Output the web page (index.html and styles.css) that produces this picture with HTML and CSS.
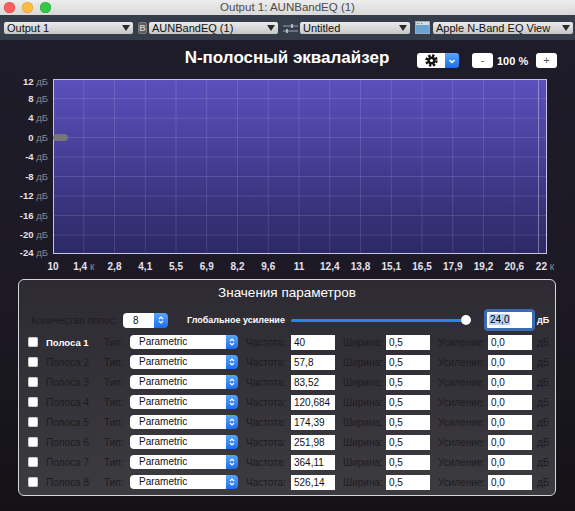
FILE: index.html
```html
<!DOCTYPE html>
<html lang="ru">
<head>
<meta charset="utf-8">
<title>Output 1: AUNBandEQ (1)</title>
<link rel="stylesheet" href="styles.css">
</head>
<body>
<div class="window">
  <header class="titlebar">
    <div class="lights"><span class="light red"></span><span class="light yellow"></span><span class="light green"></span></div>
    <div class="wtitle">Output 1: AUNBandEQ (1)</div>
    <div></div>
  </header>
  <nav class="toolbar">
    <div class="popup p-out"><span>Output 1</span><i class="arr"></i></div>
    <span class="bicon">B</span>
    <div class="popup p-au"><span>AUNBandEQ (1)</span><i class="arr"></i></div>
    <svg class="slidericon" viewBox="0 0 15 12" width="15" height="12">
      <path d="M0 4h15M0 9h15" stroke="#9aa3b0" stroke-width="1"/>
      <path d="M9 2v4M4 7v4" stroke="#c9ced6" stroke-width="1.6"/>
    </svg>
    <div class="popup p-unt"><span>Untitled</span><i class="arr"></i></div>
    <svg class="winicon" viewBox="0 0 15 13" width="15" height="13">
      <rect x="0.5" y="0.5" width="14" height="12" fill="#6aa2d2" stroke="#9ab" stroke-width="1"/>
      <rect x="1" y="1" width="13" height="3" fill="#d8dde4"/>
      <circle cx="2.6" cy="2.5" r="0.8" fill="#e44"/>
      <circle cx="4.6" cy="2.5" r="0.8" fill="#eb3"/>
      <circle cx="6.6" cy="2.5" r="0.8" fill="#4b4"/>
    </svg>
    <div class="popup p-view"><span>Apple N-Band EQ View</span><i class="arr"></i></div>
  </nav>
  <main class="main">
    <div class="header">
      <h1 class="eqtitle">N-полосный эквалайзер</h1>
      <div class="hctrls">
        <div class="gearbtn">
          <span class="gearpart">
            <svg viewBox="0 0 13 13" width="13" height="13">
              <circle cx="6.5" cy="6.5" r="4.9" fill="none" stroke="#111" stroke-width="2.6" stroke-dasharray="2.3 1.55"/>
              <circle cx="6.5" cy="6.5" r="4" fill="#111"/>
              <circle cx="6.5" cy="6.5" r="1.6" fill="#fff"/>
            </svg>
          </span>
          <span class="bluepart">
            <svg viewBox="0 0 10 10" width="10" height="10"><polyline points="2.5,4 5,6.5 7.5,4" fill="none" stroke="#fff" stroke-width="1.5"/></svg>
          </span>
        </div>
        <span class="sbtn minus">-</span>
        <span class="zoomval">100 %</span>
        <span class="sbtn plus">+</span>
      </div>
    </div>

    <svg class="graph" viewBox="0 72 575 204" width="575" height="204">
      <defs>
        <linearGradient id="plotg" x1="0" y1="0" x2="0" y2="1">
          <stop offset="0" stop-color="#5b50bd"/>
          <stop offset="1" stop-color="#2b2966"/>
        </linearGradient>
      </defs>
      <rect x="53.5" y="79.5" width="493" height="174" fill="url(#plotg)"/>
      <g class="grid">
        <path d="M83.75 80V254M114.5 80V254M145.25 80V254M176 80V254M206.75 80V254M237.5 80V254M268.25 80V254M299 80V254M329.75 80V254M360.5 80V254M391.25 80V254M422 80V254M452.75 80V254M483.5 80V254M514.25 80V254"/>
        <path d="M54 98.5H546M54 118H546M54 137.5H546M54 157H546M54 176.5H546M54 196H546M54 215.5H546M54 235H546"/>
      </g>
      <path class="hiline" d="M538.5 80V254"/>
      <rect class="plotborder" x="53.5" y="79.5" width="493" height="174"/>
      <rect class="handle" x="53" y="134" width="15" height="7" rx="3.5"/>
      <g class="ylab">
        <text x="48" y="84.5"><tspan class="num">12</tspan><tspan class="unit"> дБ</tspan></text>
        <text x="48" y="101.5"><tspan class="num">8</tspan><tspan class="unit"> дБ</tspan></text>
        <text x="48" y="121"><tspan class="num">4</tspan><tspan class="unit"> дБ</tspan></text>
        <text x="48" y="140.5"><tspan class="num">0</tspan><tspan class="unit"> дБ</tspan></text>
        <text x="48" y="160"><tspan class="num">-4</tspan><tspan class="unit"> дБ</tspan></text>
        <text x="48" y="179.5"><tspan class="num">-8</tspan><tspan class="unit"> дБ</tspan></text>
        <text x="48" y="199"><tspan class="num">-12</tspan><tspan class="unit"> дБ</tspan></text>
        <text x="48" y="218.5"><tspan class="num">-16</tspan><tspan class="unit"> дБ</tspan></text>
        <text x="48" y="238"><tspan class="num">-20</tspan><tspan class="unit"> дБ</tspan></text>
        <text x="48" y="255.5"><tspan class="num">-24</tspan><tspan class="unit"> дБ</tspan></text>
      </g>
      <g class="xlab">
        <text x="53" y="269.5">10</text>
        <text x="83.75" y="269.5">1,4<tspan class="unit"> к</tspan></text>
        <text x="114.5" y="269.5">2,8</text>
        <text x="145.25" y="269.5">4,1</text>
        <text x="176" y="269.5">5,5</text>
        <text x="206.75" y="269.5">6,9</text>
        <text x="237.5" y="269.5">8,2</text>
        <text x="268.25" y="269.5">9,6</text>
        <text x="299" y="269.5">11</text>
        <text x="329.75" y="269.5">12,4</text>
        <text x="360.5" y="269.5">13,8</text>
        <text x="391.25" y="269.5">15,1</text>
        <text x="422" y="269.5">16,5</text>
        <text x="452.75" y="269.5">17,9</text>
        <text x="483.5" y="269.5">19,2</text>
        <text x="514.25" y="269.5">20,6</text>
        <text x="545" y="269.5">22<tspan class="unit"> к</tspan></text>
      </g>
    </svg>

    <section class="panel">
      <h2 class="ptitle">Значения параметров</h2>
      <div class="ctrlrow">
        <span class="dim">Количество полос:</span>
        <div class="stepper"><span class="stepval">8</span><span class="stepblue">
          <svg viewBox="0 0 8 12" width="8" height="12"><polyline points="2,5 4,3 6,5" fill="none" stroke="#fff" stroke-width="1.2"/><polyline points="2,7 4,9 6,7" fill="none" stroke="#fff" stroke-width="1.2"/></svg>
        </span></div>
        <span class="glob">Глобальное усиление</span>
        <div class="slider"><div class="track"></div><div class="knob"></div></div>
        <div class="focusfield"><span class="sel">24,0</span></div>
        <span class="db-w">дБ</span>
      </div>

      <div class="bands">
        <div class="band">
          <span class="cb"></span><span class="bname on">Полоса 1</span><span class="dim">Тип:</span>
          <div class="select"><span>Parametric</span><span class="selblue"><svg viewBox="0 0 8 12" width="8" height="12"><polyline points="2,5 4,3 6,5" fill="none" stroke="#fff" stroke-width="1.2"/><polyline points="2,7 4,9 6,7" fill="none" stroke="#fff" stroke-width="1.2"/></svg></span></div>
          <span class="dim lbl">Частота:</span><span class="field">40</span>
          <span class="dim lbl">Ширина:</span><span class="field">0,5</span>
          <span class="dim lbl">Усиление:</span><span class="field">0,0</span>
          <span class="dim db">дБ</span>
        </div>
        <div class="band">
          <span class="cb"></span><span class="bname">Полоса 2</span><span class="dim">Тип:</span>
          <div class="select"><span>Parametric</span><span class="selblue"><svg viewBox="0 0 8 12" width="8" height="12"><polyline points="2,5 4,3 6,5" fill="none" stroke="#fff" stroke-width="1.2"/><polyline points="2,7 4,9 6,7" fill="none" stroke="#fff" stroke-width="1.2"/></svg></span></div>
          <span class="dim lbl">Частота:</span><span class="field">57,8</span>
          <span class="dim lbl">Ширина:</span><span class="field">0,5</span>
          <span class="dim lbl">Усиление:</span><span class="field">0,0</span>
          <span class="dim db">дБ</span>
        </div>
        <div class="band">
          <span class="cb"></span><span class="bname">Полоса 3</span><span class="dim">Тип:</span>
          <div class="select"><span>Parametric</span><span class="selblue"><svg viewBox="0 0 8 12" width="8" height="12"><polyline points="2,5 4,3 6,5" fill="none" stroke="#fff" stroke-width="1.2"/><polyline points="2,7 4,9 6,7" fill="none" stroke="#fff" stroke-width="1.2"/></svg></span></div>
          <span class="dim lbl">Частота:</span><span class="field">83,52</span>
          <span class="dim lbl">Ширина:</span><span class="field">0,5</span>
          <span class="dim lbl">Усиление:</span><span class="field">0,0</span>
          <span class="dim db">дБ</span>
        </div>
        <div class="band">
          <span class="cb"></span><span class="bname">Полоса 4</span><span class="dim">Тип:</span>
          <div class="select"><span>Parametric</span><span class="selblue"><svg viewBox="0 0 8 12" width="8" height="12"><polyline points="2,5 4,3 6,5" fill="none" stroke="#fff" stroke-width="1.2"/><polyline points="2,7 4,9 6,7" fill="none" stroke="#fff" stroke-width="1.2"/></svg></span></div>
          <span class="dim lbl">Частота:</span><span class="field">120,684</span>
          <span class="dim lbl">Ширина:</span><span class="field">0,5</span>
          <span class="dim lbl">Усиление:</span><span class="field">0,0</span>
          <span class="dim db">дБ</span>
        </div>
        <div class="band">
          <span class="cb"></span><span class="bname">Полоса 5</span><span class="dim">Тип:</span>
          <div class="select"><span>Parametric</span><span class="selblue"><svg viewBox="0 0 8 12" width="8" height="12"><polyline points="2,5 4,3 6,5" fill="none" stroke="#fff" stroke-width="1.2"/><polyline points="2,7 4,9 6,7" fill="none" stroke="#fff" stroke-width="1.2"/></svg></span></div>
          <span class="dim lbl">Частота:</span><span class="field">174,39</span>
          <span class="dim lbl">Ширина:</span><span class="field">0,5</span>
          <span class="dim lbl">Усиление:</span><span class="field">0,0</span>
          <span class="dim db">дБ</span>
        </div>
        <div class="band">
          <span class="cb"></span><span class="bname">Полоса 6</span><span class="dim">Тип:</span>
          <div class="select"><span>Parametric</span><span class="selblue"><svg viewBox="0 0 8 12" width="8" height="12"><polyline points="2,5 4,3 6,5" fill="none" stroke="#fff" stroke-width="1.2"/><polyline points="2,7 4,9 6,7" fill="none" stroke="#fff" stroke-width="1.2"/></svg></span></div>
          <span class="dim lbl">Частота:</span><span class="field">251,98</span>
          <span class="dim lbl">Ширина:</span><span class="field">0,5</span>
          <span class="dim lbl">Усиление:</span><span class="field">0,0</span>
          <span class="dim db">дБ</span>
        </div>
        <div class="band">
          <span class="cb"></span><span class="bname">Полоса 7</span><span class="dim">Тип:</span>
          <div class="select"><span>Parametric</span><span class="selblue"><svg viewBox="0 0 8 12" width="8" height="12"><polyline points="2,5 4,3 6,5" fill="none" stroke="#fff" stroke-width="1.2"/><polyline points="2,7 4,9 6,7" fill="none" stroke="#fff" stroke-width="1.2"/></svg></span></div>
          <span class="dim lbl">Частота:</span><span class="field">364,11</span>
          <span class="dim lbl">Ширина:</span><span class="field">0,5</span>
          <span class="dim lbl">Усиление:</span><span class="field">0,0</span>
          <span class="dim db">дБ</span>
        </div>
        <div class="band">
          <span class="cb"></span><span class="bname">Полоса 8</span><span class="dim">Тип:</span>
          <div class="select"><span>Parametric</span><span class="selblue"><svg viewBox="0 0 8 12" width="8" height="12"><polyline points="2,5 4,3 6,5" fill="none" stroke="#fff" stroke-width="1.2"/><polyline points="2,7 4,9 6,7" fill="none" stroke="#fff" stroke-width="1.2"/></svg></span></div>
          <span class="dim lbl">Частота:</span><span class="field">526,14</span>
          <span class="dim lbl">Ширина:</span><span class="field">0,5</span>
          <span class="dim lbl">Усиление:</span><span class="field">0,0</span>
          <span class="dim db">дБ</span>
        </div>
      </div>
    </section>
  </main>
</div>
</body>
</html>
```

FILE: styles.css
```css
* { box-sizing: border-box; }

body {
  margin: 0;
  width: 575px;
  height: 511px;
  overflow: hidden;
  background: #161419;
  font-family: "Liberation Sans", Arial, sans-serif;
}

.window { width: 575px; height: 511px; }

/* title bar */
.titlebar {
  height: 15px;
  display: grid;
  grid-template-columns: 1fr auto 1fr;
  align-items: center;
  background: linear-gradient(#ededed, #d8d8d8);
}
.lights { display: flex; gap: 7px; padding-left: 4px; }
.light { width: 11px; height: 11px; border-radius: 50%; }
.red { background: #fc605c; box-shadow: inset 0 0 0 0.5px #de4a45; }
.yellow { background: #fdbc40; box-shadow: inset 0 0 0 0.5px #dea236; }
.green { background: #34c84a; box-shadow: inset 0 0 0 0.5px #27aa35; }
.wtitle { font-size: 11.5px; color: #4b4b4b; line-height: 15px; }

/* toolbar */
.toolbar {
  height: 25px;
  background: #363d4a;
  display: flex;
  align-items: center;
  padding-left: 4px;
}
.popup {
  height: 12px;
  background: linear-gradient(#ebebeb, #c6c6c6);
  border-radius: 2px;
  display: flex;
  align-items: center;
  justify-content: space-between;
  padding: 0 3px 0 3px;
  font-size: 11px;
  line-height: 12px;
  color: #111;
}
.arr {
  width: 0; height: 0;
  border-left: 4px solid transparent;
  border-right: 4px solid transparent;
  border-top: 6px solid #2a2a2a;
}
.p-out { width: 129px; }
.bicon {
  margin-left: 5px;
  width: 9px; height: 12px;
  background: #5c5c5c;
  border: 1px solid #7a7a7a;
  border-radius: 2px;
  color: #c8c8c8;
  font-size: 9px; font-weight: bold;
  line-height: 10px;
  text-align: center;
}
.p-au { width: 129px; margin-left: 2px; }
.slidericon { margin-left: 5px; }
.p-unt { width: 110px; margin-left: 2px; }
.winicon { margin-left: 5px; }
.p-view { width: 140px; margin-left: 3px; }

/* main */
.main {
  height: 471px;
  background: linear-gradient(#1e1c28 0%, #1c1925 55%, #141216 100%);
  overflow: hidden;
}
.header {
  height: 32px;
  padding-top: 4px;
  display: grid;
  grid-template-columns: 157px 260px 1fr;
  align-items: center;
}
.eqtitle {
  grid-column: 2;
  margin: 0;
  font-size: 17px;
  font-weight: bold;
  color: #fff;
  text-align: center;
  line-height: 20px;
}
.hctrls {
  grid-column: 3;
  display: flex;
  align-items: center;
  margin-top: 5px;
}
.gearbtn { display: flex; height: 15px; }
.gearpart {
  width: 28px; height: 15px;
  background: #fff;
  border-radius: 3px 0 0 3px;
  display: flex; align-items: center; justify-content: center;
}
.bluepart {
  width: 14px; height: 15px;
  background: linear-gradient(#5aa6fb, #1b6ef0);
  border-radius: 0 3px 3px 0;
  display: flex; align-items: center; justify-content: center;
}
.sbtn {
  width: 21px; height: 15px;
  background: #fff;
  border-radius: 3px;
  color: #555;
  font-size: 11px;
  line-height: 15px;
  text-align: center;
}
.minus { margin-left: 13px; }
.zoomval {
  margin-left: 4px;
  width: 36px;
  font-size: 11px; font-weight: bold;
  color: #fff;
}
.plus { margin-left: 3px; }

/* graph */
.graph { display: block; }
.grid path { stroke: rgba(255,255,255,0.12); stroke-width: 1; fill: none; }
.hiline { stroke: rgba(255,255,255,0.35); stroke-width: 1; }
.plotborder { fill: none; stroke: #c6c2e4; stroke-width: 1; }
.handle { fill: #777; }
.ylab text { font-family: "Liberation Sans", Arial, sans-serif; font-size: 9.5px; text-anchor: end; }
.xlab text { font-family: "Liberation Sans", Arial, sans-serif; font-size: 10px; text-anchor: middle; font-weight: bold; fill: #e4e2ec; }
.num { font-weight: bold; fill: #e4e2ec; }
.unit { font-weight: normal; fill: #8a8794; }

/* panel */
.panel {
  margin: 3px 0 0 18px;
  width: 538px;
  height: 217px;
  border: 1px solid #d6d6da;
  border-radius: 6px;
  background: linear-gradient(#2d2a33, #3c3b3f);
  padding-top: 5px;
}
.ptitle {
  margin: 0;
  font-size: 13.5px;
  font-weight: normal;
  color: #fff;
  text-align: center;
  line-height: 16px;
}
.ctrlrow {
  margin-top: 8px;
  height: 22px;
  display: grid;
  grid-template-columns: 92px 45px 119px 197px 51px auto;
  align-items: center;
  padding-left: 12px;
  font-size: 10px;
}
.dim { color: #1d1c21; font-size: 10px; }
.stepper { display: flex; height: 15px; }
.stepval {
  width: 31px; background: #fff;
  border-radius: 4px 0 0 4px;
  font-size: 10px; color: #111;
  line-height: 15px;
  padding-left: 10px;
}
.stepblue, .selblue {
  width: 14px;
  background: linear-gradient(#5aa6fb, #1b6ef0);
  border-radius: 0 4px 4px 0;
  display: flex; align-items: center; justify-content: center;
}
.glob {
  padding-left: 19px;
  font-size: 9px; font-weight: bold;
  color: #fff;
}
.slider { position: relative; height: 12px; margin-left: 4px; width: 180px; }
.track {
  position: absolute; left: 0; top: 4.5px;
  width: 175px; height: 3px;
  background: #2f80f2;
  border-radius: 2px;
}
.knob {
  position: absolute; left: 170px; top: 1px;
  width: 10px; height: 10px;
  border-radius: 50%;
  background: #fff;
  box-shadow: 0 0 1px rgba(0,0,0,0.6);
}
.focusfield {
  width: 51px; height: 22px;
  border: 3px solid #3b6cb3;
  border-radius: 4px;
  background: #fff;
  padding: 2px 0 0 2px;
  font-size: 10px;
  line-height: 12px;
  color: #000;
}
.sel { background: #b4d2f6; padding: 0 1px; }
.db-w { padding-left: 2px; font-size: 9px; font-weight: bold; color: #fff; }

.bands { margin-top: 1px; }
.band {
  height: 20px;
  display: grid;
  grid-template-columns: 18px 58px 26px 108px 53px 44px 51px 44px 58px 44px auto;
  align-items: center;
  padding-left: 9px;
}
.cb {
  width: 10px; height: 10px;
  background: #fff;
  border-radius: 2px;
  box-shadow: inset 0 0 0 0.5px #999;
}
.bname { font-size: 10px; color: #1d1c21; }
.bname.on { color: #fff; font-weight: bold; font-size: 9.5px; }
.select {
  display: flex;
  height: 14px;
}
.select > span:first-child {
  flex: 1;
  background: #fff;
  border-radius: 4px 0 0 4px;
  font-size: 10px;
  line-height: 14px;
  color: #111;
  padding-left: 9px;
}
.selblue { width: 12px; }
.lbl { padding-left: 8px; }
.field {
  height: 15px;
  background: #fff;
  font-size: 10px;
  line-height: 15px;
  color: #111;
  padding-left: 3px;
}
.db { padding-left: 5px; }
```
